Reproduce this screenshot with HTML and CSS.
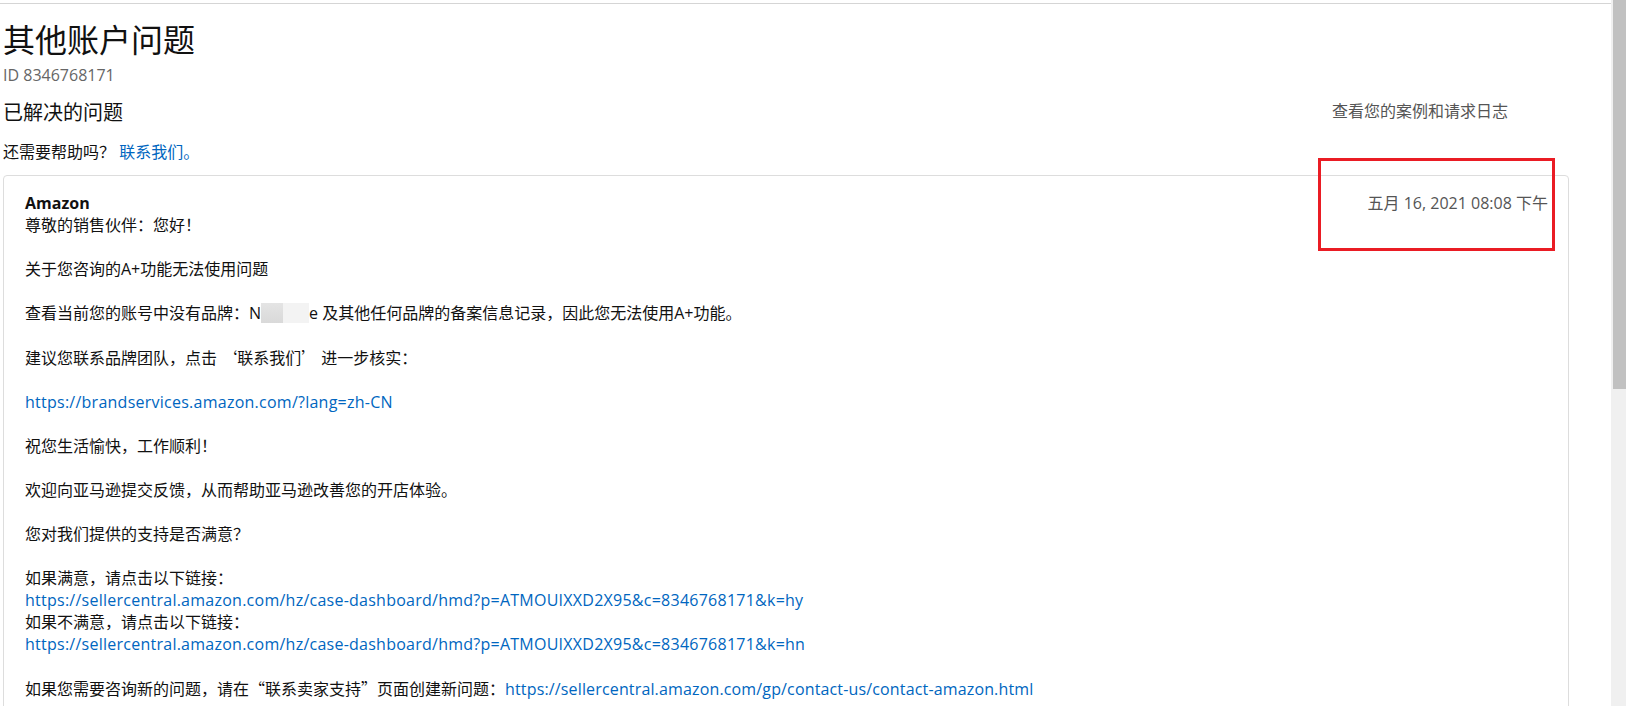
FILE: index.html
```html
<!DOCTYPE html>
<html lang="zh-CN">
<head>
    <meta charset="UTF-8">
    <meta name="viewport" content="width=device-width, initial-scale=1.0">
    <title>其他账户问题</title>
    <link rel="stylesheet" href="styles.css">
</head>
<body>
    <div class="viewport">
        <div class="page">
            <div class="content">
                <h1 class="case-title">其他账户问题</h1>
                <div class="case-id">ID 8346768171</div>
                <div class="status-row">
                    <h2 class="status">已解决的问题</h2>
                    <a class="log-link" href="#">查看您的案例和请求日志</a>
                </div>
                <p class="help">还需要帮助吗？ <a href="#">联系我们。</a></p>

                <div class="message-card">
                    <div class="message-head">
                        <strong class="sender">Amazon</strong>
                        <span class="message-date">五月 16, 2021 08:08 下午</span>
                    </div>
                    <div class="message-body">
                        <p>尊敬的销售伙伴：您好！</p>
                        <p>关于您咨询的A+功能无法使用问题</p>
                        <p>查看当前您的账号中没有品牌：N<span class="blur blur-dark"></span><span class="blur blur-light"></span>e 及其他任何品牌的备案信息记录，因此您无法使用A+功能。</p>
                        <p>建议您联系品牌团队，点击 <span class="cjk">‘联系我们’</span> 进一步核实：</p>
                        <p><a href="#">https://brandservices.amazon.com/?lang=zh-CN</a></p>
                        <p>祝您生活愉快，工作顺利！</p>
                        <p>欢迎向亚马逊提交反馈，从而帮助亚马逊改善您的开店体验。</p>
                        <p>您对我们提供的支持是否满意？</p>
                        <p>如果满意，请点击以下链接：<br>
                            <a href="#">https://sellercentral.amazon.com/hz/case-dashboard/hmd?p=ATMOUIXXD2X95&amp;c=8346768171&amp;k=hy</a><br>
                            如果不满意，请点击以下链接：<br>
                            <a href="#">https://sellercentral.amazon.com/hz/case-dashboard/hmd?p=ATMOUIXXD2X95&amp;c=8346768171&amp;k=hn</a></p>
                        <p>如果您需要咨询新的问题，请在<span class="cjk">“联系卖家支持”</span>页面创建新问题：<a class="contact-link" href="#">https://sellercentral.amazon.com/gp/contact-us/contact-amazon.html</a></p>
                    </div>
                </div>
            </div>
            <div class="highlight"></div>
        </div>
    </div>
    <div class="scrollbar"><div class="thumb"></div></div>
</body>
</html>
```

FILE: styles.css
```css
* {
    box-sizing: border-box;
}

body {
    display: flex;
    height: 100vh;
    margin: 0;
    overflow: hidden;
    font-family: "Open Sans", "Noto Sans CJK SC", sans-serif;
    font-size: 16px;
    color: #111;
    background: #fff;
}

a {
    color: #0066c0;
    text-decoration: none;
}

.message-body a {
    letter-spacing: 0.25px;
}

.message-body .contact-link {
    letter-spacing: 0.15px;
}

.viewport {
    flex: 1;
    height: 100vh;
    overflow: hidden;
}

.scrollbar {
    width: 15px;
    padding-left: 2px;
    background: #f0f0f0;
}

.thumb {
    height: 389px;
    background: #c1c1c1;
}

.page {
    position: relative;
    padding-top: 3px;
}

.content {
    border-top: 1px solid #d5d5d5;
    padding: 0 42px 0 3px;
}

.case-title {
    margin: 16px 0 0;
    font-size: 32px;
    line-height: 40px;
    font-weight: normal;
}

.case-id {
    margin-top: 4px;
    line-height: 22px;
    color: #666;
}

.status-row {
    display: flex;
    justify-content: space-between;
    align-items: center;
    margin-top: 13px;
    padding-right: 61px;
}

.status {
    margin: 0;
    font-size: 20px;
    line-height: 28px;
    font-weight: normal;
}

.log-link {
    color: #555;
    line-height: 22px;
    margin-top: -4px;
}

.help {
    margin: 14px 0 0;
    line-height: 22px;
}

.message-card {
    margin-top: 12px;
    min-height: 1110px;
    border: 1px solid #ddd;
    border-radius: 4px;
    padding: 16px 20px 20px 21px;
}

.message-head {
    display: flex;
    justify-content: space-between;
    line-height: 22px;
}

.message-date {
    color: #555;
}

.message-body {
    line-height: 22px;
}

.message-body p {
    margin: 0 0 22px;
}

.message-body .cjk {
    font-family: "Noto Sans CJK SC", sans-serif;
}

.blur {
    display: inline-block;
    height: 20px;
    vertical-align: -4px;
}

.blur-dark {
    width: 22px;
    background: linear-gradient(#e4e4e4, #d9d9d9);
}

.blur-light {
    width: 26px;
    background: #f3f3f3;
}

.highlight {
    position: absolute;
    left: 1318px;
    top: 158px;
    width: 237px;
    height: 93px;
    border: 3px solid #ea1c24;
}
```
